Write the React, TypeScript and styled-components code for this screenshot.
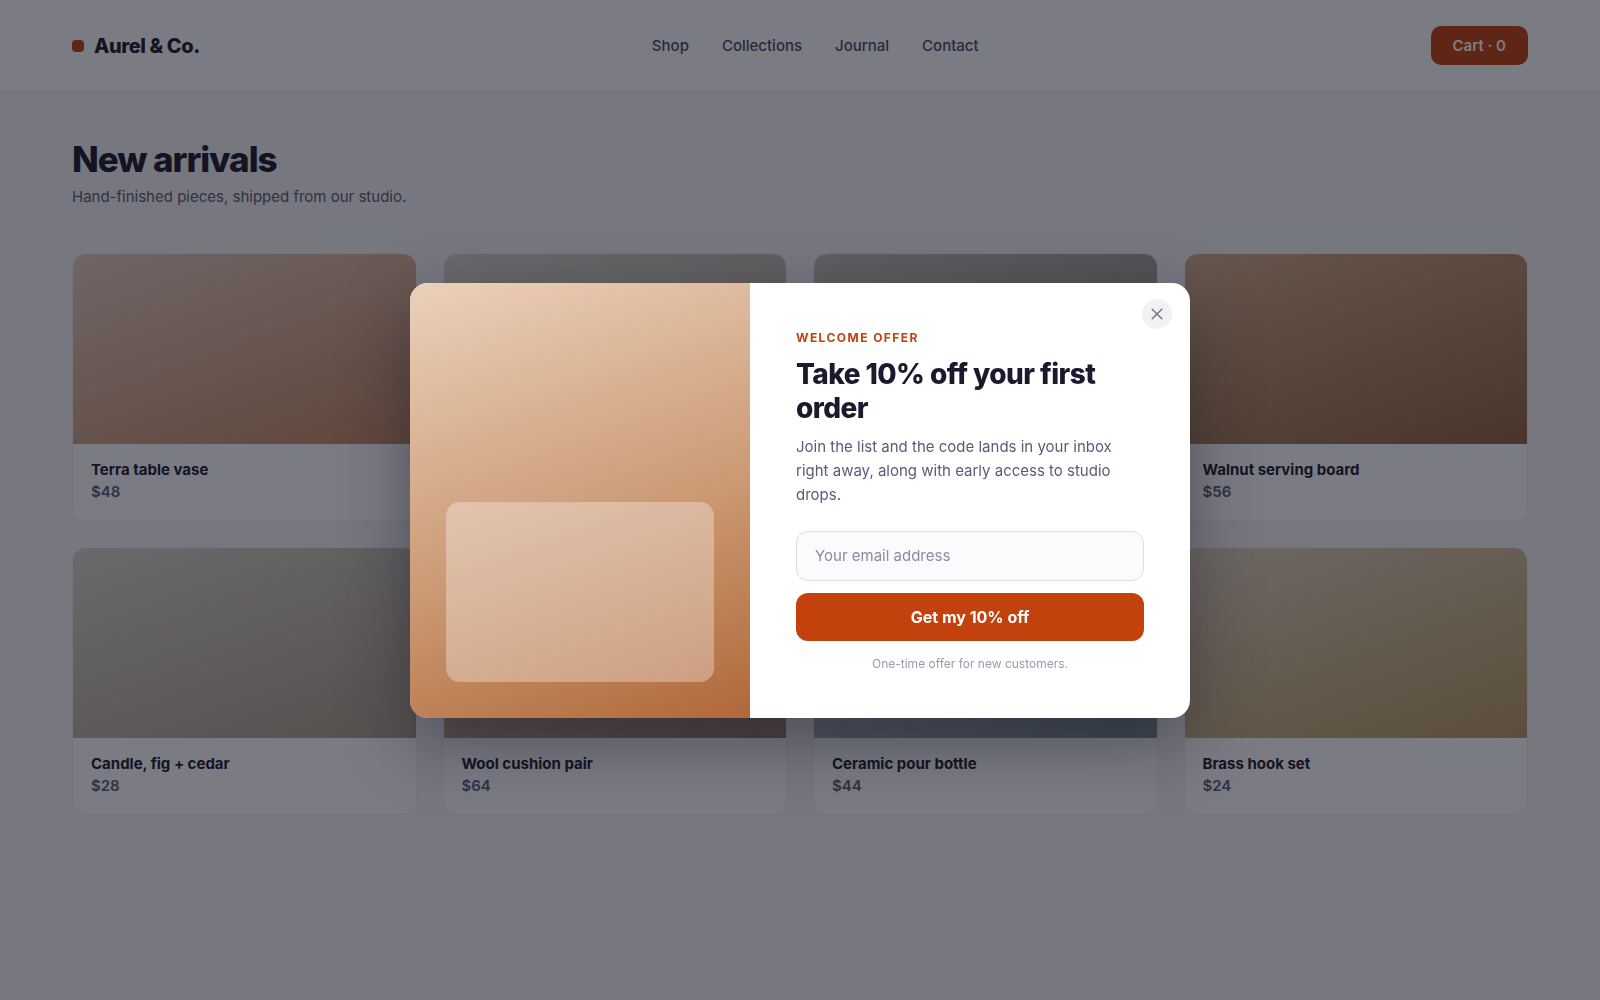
import React, { useState } from "react";
import styled, { createGlobalStyle } from "styled-components";

const GlobalStyle = createGlobalStyle`
  *, *::before, *::after { box-sizing: border-box; }
  body {
    margin: 0;
    background: #f6f6f9;
    color: #1a1a2e;
    font-family: Inter, "Liberation Sans", sans-serif;
    font-size: 16px;
  }
  h1, h2, h3, p, ul { margin: 0; padding: 0; }
  button, input { font: inherit; }
`;

const Header = styled.header`
  display: flex;
  align-items: center;
  justify-content: space-between;
  padding: 26px 72px;
  background: #ffffff;
  border-bottom: 1px solid #ebebf2;
`;

const Brand = styled.a`
  display: flex;
  align-items: center;
  gap: 10px;
  color: #1a1a2e;
  font-size: 20px;
  font-weight: 800;
  letter-spacing: -0.02em;
  text-decoration: none;
`;

const BrandMark = styled.span`
  width: 12px;
  height: 12px;
  border-radius: 4px;
  background: #c2410c;
`;

const Nav = styled.nav`
  display: flex;
  gap: 33px;
`;

const NavLink = styled.a`
  color: #4a4a68;
  font-size: 15px;
  font-weight: 500;
  line-height: 20px;
  text-decoration: none;
`;

const CartButton = styled.button`
  padding: 10px 22px;
  border: 0;
  border-radius: 10px;
  background: #c2410c;
  color: #ffffff;
  font-size: 15px;
  font-weight: 600;
  line-height: 19px;
`;

const Main = styled.main`
  padding: 44px 72px;
`;

const PageTitle = styled.h1`
  font-size: 35px;
  font-weight: 800;
  line-height: 46px;
  letter-spacing: -0.03em;
`;

const PageIntro = styled.p`
  margin-top: 4px;
  color: #5b5b76;
  font-size: 15px;
  line-height: 22px;
`;

const ProductGrid = styled.ul`
  display: grid;
  grid-template-columns: repeat(4, 1fr);
  gap: 26px;
  margin-top: 45px;
  list-style: none;
`;

const ProductCard = styled.li`
  overflow: hidden;
  border: 1px solid #f0f0f5;
  border-radius: 14px;
  background: #ffffff;
`;

const ProductImage = styled.div<{ $from: string; $to: string }>`
  height: 190px;
  background: linear-gradient(160deg, ${(p) => p.$from}, ${(p) => p.$to});
`;

const ProductBody = styled.div`
  display: grid;
  gap: 3px;
  padding: 16px 18px 19px;
`;

const ProductName = styled.h3`
  font-size: 15px;
  font-weight: 700;
  line-height: 20px;
`;

const ProductPrice = styled.p`
  color: #5b5b76;
  font-size: 15px;
  font-weight: 600;
  line-height: 18px;
`;

const Overlay = styled.div`
  position: fixed;
  inset: 0;
  display: flex;
  align-items: center;
  justify-content: center;
  background: rgba(15, 15, 30, 0.55);
`;

const Dialog = styled.section`
  position: relative;
  display: grid;
  grid-template-columns: 340px 1fr;
  width: 780px;
  max-width: 100%;
  overflow: hidden;
  border-radius: 18px;
  background: #ffffff;
  box-shadow: 0 24px 70px rgba(15, 15, 30, 0.4);
`;

const DialogVisual = styled.div`
  display: flex;
  align-items: flex-end;
  padding: 36px;
  background: linear-gradient(160deg, #ebd1ba 0%, #cc9b76 55%, #b0683a 100%);
`;

const VisualPanel = styled.div`
  flex: 1;
  height: 180px;
  border-radius: 14px;
  background: rgba(255, 255, 255, 0.32);
`;

const DialogBody = styled.div`
  padding: 46px;
`;

const Eyebrow = styled.p`
  color: #c2410c;
  font-size: 12px;
  font-weight: 700;
  line-height: 18px;
  letter-spacing: 0.12em;
  text-transform: uppercase;
`;

const DialogTitle = styled.h2`
  margin-top: 10px;
  font-size: 28px;
  font-weight: 800;
  line-height: 34px;
  letter-spacing: -0.02em;
`;

const DialogText = styled.p`
  margin-top: 10px;
  color: #5b5b76;
  font-size: 15px;
  line-height: 24px;
`;

const SignupForm = styled.form`
  display: grid;
  gap: 12px;
  margin-top: 24px;
`;

const EmailInput = styled.input`
  width: 100%;
  height: 50px;
  padding: 0 18px;
  border: 1px solid #dcdcea;
  border-radius: 12px;
  background: #fbfbfe;
  color: #1a1a2e;
  font-size: 15px;

  &::placeholder { color: #8a8aa0; opacity: 1; }
`;

const SubmitButton = styled.button`
  height: 48px;
  border: 0;
  border-radius: 12px;
  background: #c2410c;
  color: #ffffff;
  font-size: 16px;
  font-weight: 700;
`;

const FinePrint = styled.p`
  margin-top: 14px;
  color: #9a9ab0;
  font-size: 12px;
  line-height: 17px;
  text-align: center;
`;

const CloseButton = styled.button`
  position: absolute;
  top: 16px;
  right: 18px;
  display: grid;
  place-items: center;
  width: 30px;
  height: 30px;
  padding: 0;
  border: 0;
  border-radius: 50%;
  background: #f1f1f6;
  color: #77777f;
`;

type Product = { id: number; name?: string; price?: string; from: string; to: string };

const products: Product[] = [
  { id: 1, name: "Terra table vase", price: "$48", from: "#e6d0bc", to: "#c48a62" },
  { id: 2, from: "#dad9cc", to: "#a39c88" },
  { id: 3, from: "#c3c2b6", to: "#807a70" },
  { id: 4, name: "Walnut serving board", price: "$56", from: "#d3ae88", to: "#8f633c" },
  { id: 5, name: "Candle, fig + cedar", price: "$28", from: "#dad7cb", to: "#ada08a" },
  { id: 6, name: "Wool cushion pair", price: "$64", from: "#dcc8b8", to: "#a08068" },
  { id: 7, name: "Ceramic pour bottle", price: "$44", from: "#cfd8d8", to: "#7c9090" },
  { id: 8, name: "Brass hook set", price: "$24", from: "#e0d6bc", to: "#ba9c60" },
];

export default function App() {
  const [email, setEmail] = useState("");
  return (
    <>
      <GlobalStyle />
      <Header>
        <Brand href="#home"><BrandMark />Aurel &amp; Co.</Brand>
        <Nav aria-label="Main">
          {["Shop", "Collections", "Journal", "Contact"].map((item) => (
            <NavLink key={item} href={`#${item.toLowerCase()}`}>{item}</NavLink>
          ))}
        </Nav>
        <CartButton type="button">Cart · 0</CartButton>
      </Header>
      <Main>
        <PageTitle>New arrivals</PageTitle>
        <PageIntro>Hand-finished pieces, shipped from our studio.</PageIntro>
        <ProductGrid>
          {products.map((p) => (
            <ProductCard key={p.id}>
              <ProductImage $from={p.from} $to={p.to} />
              {p.name && (
                <ProductBody>
                  <ProductName>{p.name}</ProductName>
                  <ProductPrice>{p.price}</ProductPrice>
                </ProductBody>
              )}
            </ProductCard>
          ))}
        </ProductGrid>
      </Main>
      <Overlay>
        <Dialog role="dialog" aria-modal="true" aria-labelledby="offer-title">
          <DialogVisual><VisualPanel /></DialogVisual>
          <DialogBody>
            <Eyebrow>Welcome offer</Eyebrow>
            <DialogTitle id="offer-title">Take 10% off your first order</DialogTitle>
            <DialogText>
              Join the list and the code lands in your inbox right away, along with early access to studio drops.
            </DialogText>
            <SignupForm onSubmit={(e) => e.preventDefault()}>
              <EmailInput
                type="email"
                aria-label="Your email address"
                placeholder="Your email address"
                value={email}
                onChange={(e) => setEmail(e.target.value)}
              />
              <SubmitButton type="submit">Get my 10% off</SubmitButton>
            </SignupForm>
            <FinePrint>One-time offer for new customers.</FinePrint>
          </DialogBody>
          <CloseButton type="button" aria-label="Close">
            <svg width="12" height="12" viewBox="0 0 12 12" fill="none" stroke="currentColor" strokeWidth="1.5" strokeLinecap="round">
              <path d="M1.2 1.2 10.8 10.8M10.8 1.2 1.2 10.8" />
            </svg>
          </CloseButton>
        </Dialog>
      </Overlay>
    </>
  );
}
